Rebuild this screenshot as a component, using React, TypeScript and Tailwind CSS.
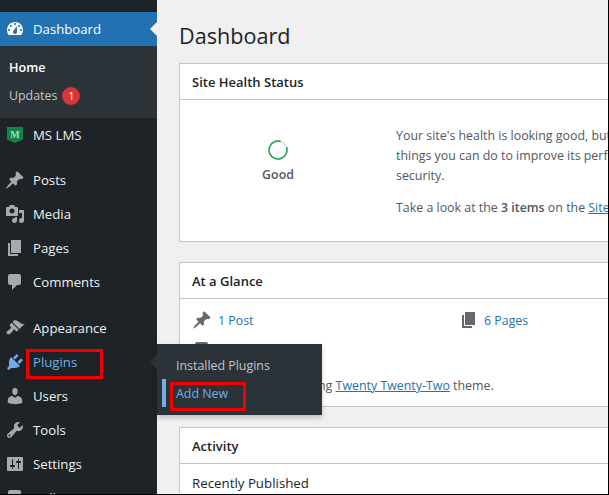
const paths: Record<string, string> = {
  dashboard: "M3.76 16h12.48c1.1-1.37 1.76-3.11 1.76-5 0-4.42-3.58-8-8-8s-8 3.58-8 8c0 1.89.66 3.63 1.76 5zM10 4c.55 0 1 .45 1 1s-.45 1-1 1-1-.45-1-1 .45-1 1-1zM6 6c.55 0 1 .45 1 1s-.45 1-1 1-1-.45-1-1 .45-1 1-1zm8 0c.55 0 1 .45 1 1s-.45 1-1 1-1-.45-1-1 .45-1 1-1zm-5.37 5.55L12 7v6c0 1.1-.9 2-2 2s-2-.9-2-2c0-.57.24-1.08.63-1.45zM4 10c.55 0 1 .45 1 1s-.45 1-1 1-1-.45-1-1 .45-1 1-1zm12 0c.55 0 1 .45 1 1s-.45 1-1 1-1-.45-1-1 .45-1 1-1z",
  post: "M10.44 3.02l1.82-1.82 6.36 6.35-1.83 1.82c-1.05-.68-2.48-.57-3.41.36l-.75.75c-.92.93-1.04 2.35-.35 3.41l-1.83 1.82-2.41-2.41-2.8 2.79c-.42.42-3.38 2.71-3.8 2.29s1.86-3.39 2.28-3.81l2.79-2.79L4.1 9.36l1.83-1.82c1.05.69 2.48.57 3.4-.36l.75-.75c.93-.92 1.05-2.35.36-3.41z",
  media: "M13 11V4c0-.55-.45-1-1-1h-1.67L9 1H5L3.67 3H2c-.55 0-1 .45-1 1v7c0 .55.45 1 1 1h10c.55 0 1-.45 1-1zM7 4.5c1.38 0 2.5 1.12 2.5 2.5S8.38 9.5 7 9.5 4.5 8.38 4.5 7 5.62 4.5 7 4.5zM14 6h5v10.5c0 1.38-1.12 2.5-2.5 2.5S14 17.88 14 16.5s1.12-2.5 2.5-2.5c.17 0 .34.02.5.05V9h-3V6zm-4 8.05V13h2v3.5c0 1.38-1.12 2.5-2.5 2.5S7 17.88 7 16.5 8.12 14 9.5 14c.17 0 .34.02.5.05z",
  page: "M6 15V2h10v13H6zm-1 1h8v2H3V5h2v11z",
  comments: "M5 2h9c1.1 0 2 .9 2 2v7c0 1.1-.9 2-2 2h-2l-5 5v-5H5c-1.1 0-2-.9-2-2V4c0-1.1.9-2 2-2z",
  appearance: "M14.48 11.06L7.41 3.99l1.5-1.5c.5-.56 2.3-.47 3.51.32 1.21.8 1.43 1.28 2.91 2.1 1.18.64 2.45 1.26 4.45.85zm-.71.71L6.7 4.7 4.93 6.47c-.39.39-.39 1.02 0 1.41l1.06 1.06c.39.39.39 1.03 0 1.42-.6.6-1.43 1.11-2.21 1.69-.35.26-.7.53-1.01.84C1.43 13.23.96 14.72 2.06 15.82s2.59.63 3.91-.71c.31-.31.58-.66.84-1.01.58-.78 1.09-1.61 1.69-2.21.39-.39 1.03-.39 1.42 0l1.06 1.06c.39.39 1.02.39 1.41 0z",
  plugins: "M13.11 4.36L9.87 7.6 8 5.73l3.24-3.24c.35-.34 1.05-.2 1.56.32.52.51.66 1.21.31 1.55zm-8 1.77l.91-1.12 9.01 9.01-1.19.84c-.71.71-2.63 1.16-3.82 1.16H6.14L4.9 17.26c-.59.59-1.54.59-2.12 0-.59-.58-.59-1.53 0-2.12l1.24-1.24v-3.88c0-1.13.4-3.19 1.09-3.89zm7.26 3.97l3.24-3.24c.34-.35 1.04-.21 1.55.31.52.51.66 1.21.31 1.55l-3.24 3.25z",
  users: "M10 9.25c-2.27 0-2.73-3.44-2.73-3.44C7 4.02 7.82 2 9.97 2c2.16 0 2.98 2.02 2.71 3.81 0 0-.41 3.44-2.68 3.44zm0 2.57L12.72 10c2.39 0 4.52 2.33 4.52 4.53v2.49s-3.65 1.13-7.24 1.13c-3.65 0-7.24-1.13-7.24-1.13v-2.49c0-2.25 1.94-4.48 4.47-4.48z",
  tools: "M16.68 9.77c-1.34 1.34-3.3 1.67-4.95.99l-5.41 6.52c-.99.99-2.59.99-3.58 0s-.99-2.59 0-3.57l6.52-5.42c-.68-1.65-.35-3.61.99-4.95 1.28-1.28 3.12-1.62 4.72-1.06l-2.89 2.89 2.82 2.82 2.86-2.87c.53 1.58.18 3.39-1.08 4.65zM3.81 16.21c.4.39 1.04.39 1.43 0 .4-.4.4-1.04 0-1.43-.39-.4-1.03-.4-1.43 0-.39.39-.39 1.03 0 1.43z",
  settings: "M18 16V4c0-.55-.45-1-1-1H3c-.55 0-1 .45-1 1v12c0 .55.45 1 1 1h14c.55 0 1-.45 1-1zM8 11h1c.55 0 1 .45 1 1s-.45 1-1 1H8v1.5c0 .28-.22.5-.5.5s-.5-.22-.5-.5V13H6c-.55 0-1-.45-1-1s.45-1 1-1h1V5.5c0-.28.22-.5.5-.5s.5.22.5.5V11zm5-2h-1c-.55 0-1-.45-1-1s.45-1 1-1h1V5.5c0-.28.22-.5.5-.5s.5.22.5.5V7h1c.55 0 1 .45 1 1s-.45 1-1 1h-1v5.5c0 .28-.22.5-.5.5s-.5-.22-.5-.5V9z",
};

function Icon({ name, className }: { name: string; className: string }) {
  return (
    <svg viewBox="0 0 20 20" className={className} fill="currentColor" aria-hidden="true">
      <path d={paths[name]} />
    </svg>
  );
}

function Row({ icon, label, active }: { icon: string; label: string; active?: boolean }) {
  return (
    <div className={`flex h-[34px] items-center pl-[5px] ${active ? "text-[#72aee6]" : "text-[#f0f0f1]"}`}>
      <Icon name={icon} className={`h-5 w-5 shrink-0 ${active ? "text-[#72aee6]" : "text-[#a7aaad]"}`} />
      <span className="ml-2 text-[13.2px]">{label}</span>
    </div>
  );
}

function Card({ title, className, children }: { title: string; className: string; children?: React.ReactNode }) {
  return (
    <section className={`w-[560px] border border-[#c3c4c7] bg-white ${className}`}>
      <h2 className="flex h-[36px] items-center border-b border-[#c3c4c7] pl-3 pt-[2px] text-[13px] font-semibold text-[#1d2327]">{title}</h2>
      {children}
    </section>
  );
}

export default function App() {
  return (
    <div className="relative flex h-[495px] w-[609px] overflow-hidden border-r border-b border-black bg-[#f0f0f1] font-['Open_Sans','Noto_Sans',sans-serif] text-[12.4px] leading-[19px] text-[#3c434a]">
      <aside className="w-[157px] shrink-0 bg-[#1d2327] pt-3">
        <div className="relative flex h-[34px] items-center bg-[#2271b1] pl-[5px] text-white">
          <Icon name="dashboard" className="h-5 w-5 text-white" />
          <span className="ml-2 text-[13.2px]">Dashboard</span>
          <div className="absolute right-0 top-[10px] h-0 w-0 border-y-[7px] border-r-[7px] border-y-transparent border-r-[#f0f0f1]" />
        </div>
        <div className="flex h-[72px] flex-col gap-[9px] bg-[#2c3338] pl-[9px] pt-[12px]">
          <div className="text-[12.6px] font-semibold text-white">Home</div>
          <div className="flex items-center text-[#c3c4c7]">
            Updates
            <span className="ml-[5px] flex h-[18px] w-[18px] items-center justify-center rounded-full bg-[#d63638] text-[11px] text-white">1</span>
          </div>
        </div>
        <div className="flex h-[34px] items-center pl-[7px] text-[#f0f0f1]">
          <svg viewBox="0 0 16 16" className="h-4 w-4 shrink-0" aria-hidden="true">
            <path d="M0 0H16V12.5L8 16L0 12.5Z" fill="#12844a" />
            <text x="8" y="10.5" textAnchor="middle" fontSize="10" fontWeight="700" fontFamily="'Liberation Serif', serif" fill="#a9dcb9">M</text>
          </svg>
          <span className="ml-[10px] text-[13.2px]">MS LMS</span>
        </div>
        <div className="mt-[11px]">
          <Row icon="post" label="Posts" />
          <Row icon="media" label="Media" />
          <Row icon="page" label="Pages" />
          <Row icon="comments" label="Comments" />
        </div>
        <div className="mt-3">
          <Row icon="appearance" label="Appearance" />
          <Row icon="plugins" label="Plugins" active />
          <Row icon="users" label="Users" />
          <Row icon="tools" label="Tools" />
          <Row icon="settings" label="Settings" />
          <Row icon="comments" label="Collapse" />
        </div>
      </aside>

      <main className="min-w-0 flex-1 pl-[22px]">
        <h1 className="mt-[21px] h-[42px] text-[21.6px] leading-[29px] text-[#1d2327]">Dashboard</h1>
        <Card title="Site Health Status" className="h-[179px]">
          <div className="flex">
            <div className="flex w-[196px] flex-col items-center pt-[40px]">
              <svg viewBox="0 0 20 20" className="h-5 w-5" aria-hidden="true">
                <circle cx="10" cy="10" r="9" fill="none" stroke="#dcdcde" strokeWidth="1.5" />
                <circle cx="10" cy="10" r="9" fill="none" stroke="#1da64a" strokeWidth="1.5" strokeDasharray="48 9" transform="rotate(-20 10 10)" />
              </svg>
              <span className="mt-[5px] font-semibold text-[#50575e]">Good</span>
            </div>
            <div className="whitespace-nowrap pl-[20px] pt-[26px] leading-[20px] text-[#50575e]">
              <p>Your site's health is looking good, but there are still some</p>
              <p>things you can do to improve its performance and</p>
              <p>security.</p>
              <p className="mt-[12px]">Take a look at the <b className="font-semibold">3 items</b> on the <a className="text-[#2271b1] underline">Site Health screen</a>.</p>
            </div>
          </div>
        </Card>
        <Card title="At a Glance" className="mt-[20px] h-[145px]">
          <div className="relative flex pl-3 pt-[11px] text-[#2271b1]">
            <div className="flex w-[267px] items-center">
              <Icon name="post" className="h-5 w-5 text-[#646970]" />
              <span className="ml-[6px]">1 Post</span>
            </div>
            <div className="flex items-center">
              <Icon name="page" className="h-5 w-5 text-[#646970]" />
              <span className="ml-[5px]">6 Pages</span>
            </div>
          </div>
          <div className="pl-3 pt-[10px]">
            <Icon name="comments" className="h-5 w-5 text-[#646970]" />
          </div>
          <p className="whitespace-nowrap pl-[10px] pt-[16px] text-[#50575e]">WordPress 5.9.3 running <a className="text-[#2271b1] underline">Twenty Twenty-Two</a> theme.</p>
        </Card>
        <Card title="Activity" className="mt-[20px] h-[120px]">
          <p className="pl-3 pt-[10px] text-[13.3px] text-[#1d2327]">Recently Published</p>
        </Card>
      </main>

      <div className="absolute left-[157px] top-[344px] h-[71px] w-[165px] bg-[#2c3338] pl-[19px] pt-[12px] text-[#c3c4c7] shadow-[0_3px_5px_rgba(0,0,0,0.2)]">
        <div className="absolute -left-[7px] top-[11px] h-0 w-0 border-y-[7px] border-r-[7px] border-y-transparent border-r-[#2c3338]" />
        <div>Installed Plugins</div>
        <div className="mt-[9px] text-[#72aee6]">Add New</div>
        <div className="absolute left-[5px] top-[35px] h-[28px] w-1 bg-[#72aee6]" />
      </div>
      <div className="absolute left-[26px] top-[349px] h-[30px] w-[77px] border-[3px] border-[#f00000]" />
      <div className="absolute left-[170px] top-[382px] h-[29px] w-[76px] border-[3px] border-[#f00000]" />
    </div>
  );
}
